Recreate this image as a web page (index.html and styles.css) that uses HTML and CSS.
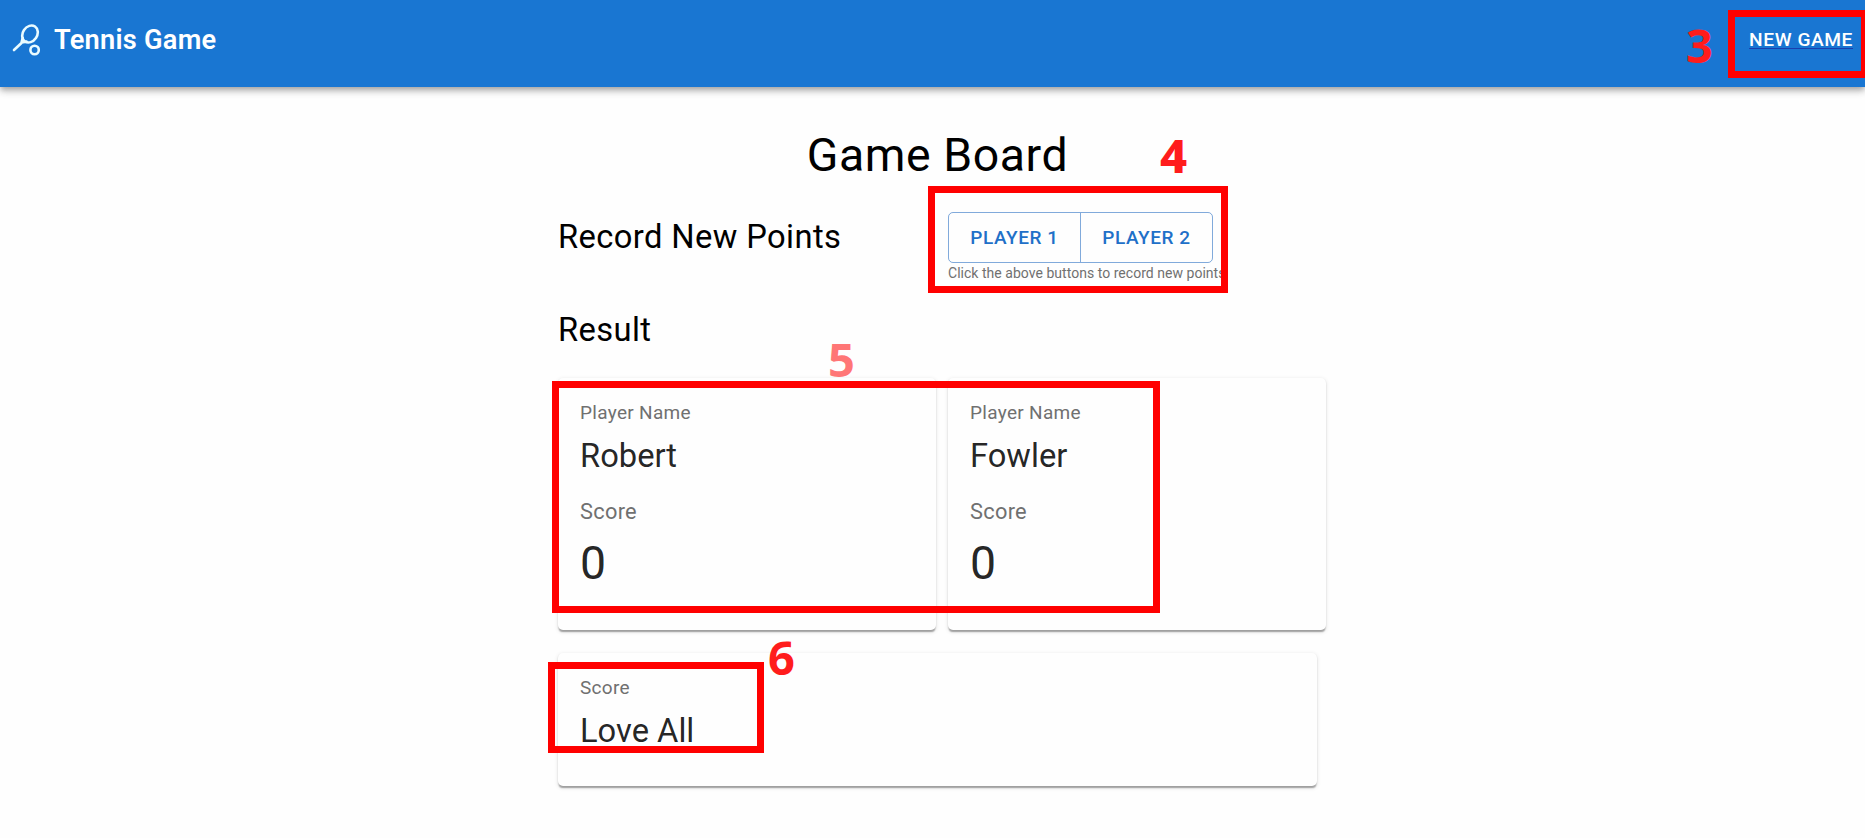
FILE: index.html
```html
<!DOCTYPE html>
<html lang="en">
<head>
<meta charset="utf-8">
<title>Tennis Game</title>
<link rel="stylesheet" href="styles.css">
</head>
<body>
<header class="appbar">
  <svg class="logo" viewBox="0 0 28 32" fill="none" stroke="#e9fbff" stroke-width="2.6" stroke-linecap="round">
    <ellipse cx="18" cy="10" rx="7.2" ry="9" transform="rotate(34 18 10)"/>
    <path d="M2 26 10 18.5M9.5 18.5 10.6 14M9.5 18.5 14.5 17.6"/>
    <circle cx="22.6" cy="26" r="4.2"/>
  </svg>
  <h1 class="brand">Tennis Game</h1>
  <a class="new-game">NEW GAME</a>
</header>
<main class="board">
  <h2 class="board-title">Game Board</h2>
  <section class="record">
    <h3 class="heading">Record New Points</h3>
    <div class="controls">
      <div class="button-group">
        <button class="player-button">PLAYER 1</button>
        <button class="player-button">PLAYER 2</button>
      </div>
      <p class="caption">Click the above buttons to record new points</p>
    </div>
  </section>
  <h3 class="heading result-heading">Result</h3>
  <section class="players">
    <article class="card">
      <p class="label">Player Name</p>
      <p class="value">Robert</p>
      <p class="score-label">Score</p>
      <p class="points">0</p>
    </article>
    <article class="card">
      <p class="label">Player Name</p>
      <p class="value">Fowler</p>
      <p class="score-label">Score</p>
      <p class="points">0</p>
    </article>
  </section>
  <article class="card summary">
    <p class="label">Score</p>
    <p class="value">Love All</p>
  </article>
</main>
<div class="marks">
  <div class="mark mark-new"></div><span class="num num-3">3</span>
  <div class="mark mark-buttons"></div><span class="num num-4">4</span>
  <div class="mark mark-players"></div><span class="num num-5">5</span>
  <div class="mark mark-score"></div><span class="num num-6">6</span>
</div>
</body>
</html>
```
FILE: styles.css
```css
* { box-sizing: border-box; }
body {
  margin: 0;
  height: 838px;
  overflow: hidden;
  position: relative;
  background: #fefefe;
  color: #000;
  font-family: Roboto, sans-serif;
}
h1, h2, h3, p { margin: 0; font-weight: 400; }
.appbar {
  display: flex;
  align-items: center;
  height: 87px;
  padding: 0 12px 8px 12px;
  background: #1976d2;
  color: #fff;
  box-shadow: 0 3px 5px -1px rgba(0,0,0,.2), 0 5px 7px rgba(0,0,0,.14), 0 1px 10px rgba(0,0,0,.12);
}
.logo { width: 28px; height: 32px; margin-top: 1px; }
.brand {
  margin-left: 14px;
  font-size: 27.2px;
  font-weight: 600;
  letter-spacing: .0095em;
}
.new-game {
  margin-left: auto;
  font-size: 19.2px;
  font-weight: 500;
  letter-spacing: .02857em;
  text-decoration: underline;
  text-decoration-color: #1a3fae;
  text-decoration-thickness: 1px;
  text-underline-offset: 2px;
}
.board { width: 769px; margin-left: 558px; padding-top: 40px; }
.board-title {
  width: 759px;
  text-align: center;
  font-size: 46.4px;
  line-height: 57px;
  letter-spacing: .0125em;
}
.record { display: flex; height: 97px; padding-top: 28px; }
.heading { font-size: 32.7px; line-height: 44px; letter-spacing: .4px; }
.record .heading { width: 390px; padding-top: 3px; }
.button-group {
  display: flex;
  width: 265px;
  height: 51px;
  border: 1px solid rgba(25,100,190,.55);
  border-radius: 5px;
}
.player-button {
  flex: 1;
  padding: 0;
  border: 0;
  background: none;
  color: #1f70c8;
  font: 500 19px Roboto, sans-serif;
  letter-spacing: .02857em;
}
.player-button + .player-button { border-left: 1px solid rgba(25,100,190,.55); }
.caption {
  color: #707070;
  font-size: 14px;
  line-height: 21px;
  letter-spacing: .03px;
  white-space: nowrap;
}
.result-heading { margin-top: 27px; }
.players { display: flex; gap: 12px; margin-top: 26px; }
.card {
  width: 378px;
  height: 252px;
  padding: 21px 22px;
  border-radius: 5px;
  background: #fefefe;
  color: rgba(0,0,0,.87);
  box-shadow: 0 2.7px 1.4px -1.4px rgba(0,0,0,.2), 0 1.4px 1.4px rgba(0,0,0,.14), 0 1.4px 4px rgba(0,0,0,.12);
}
.label { color: #707070; font-size: 19px; line-height: 27px; letter-spacing: .016em; }
.value { margin-top: 8px; font-size: 32.7px; line-height: 44px; }
.score-label { margin-top: 18px; color: #707070; font-size: 21.8px; line-height: 32px; letter-spacing: .013em; }
.points { margin-top: 7px; font-size: 46.4px; line-height: 57px; letter-spacing: .00735em; }
.card.summary { width: 759px; height: 133px; margin-top: 23px; }

/* Annotation frames drawn over the board */
.mark { position: absolute; border: 7px solid #f00; }
.mark-new { left: 1728px; top: 10px; width: 140px; height: 68px; }
.mark-buttons { left: 928px; top: 186px; width: 300px; height: 107px; }
.mark-players { left: 552px; top: 381px; width: 608px; height: 232px; }
.mark-score { left: 548px; top: 662px; width: 216px; height: 91px; }
.num {
  position: absolute;
  color: #ff1c1c;
  font: 700 47px/48px "Noto Sans", sans-serif;
}
.num-3 { left: 1686px; top: 21px; }
.num-4 { left: 1160px; top: 131px; font-weight: 800; }
.num-5 { left: 828px; top: 335px; color: #ff7676; }
.num-6 { left: 768px; top: 633px; }
```
